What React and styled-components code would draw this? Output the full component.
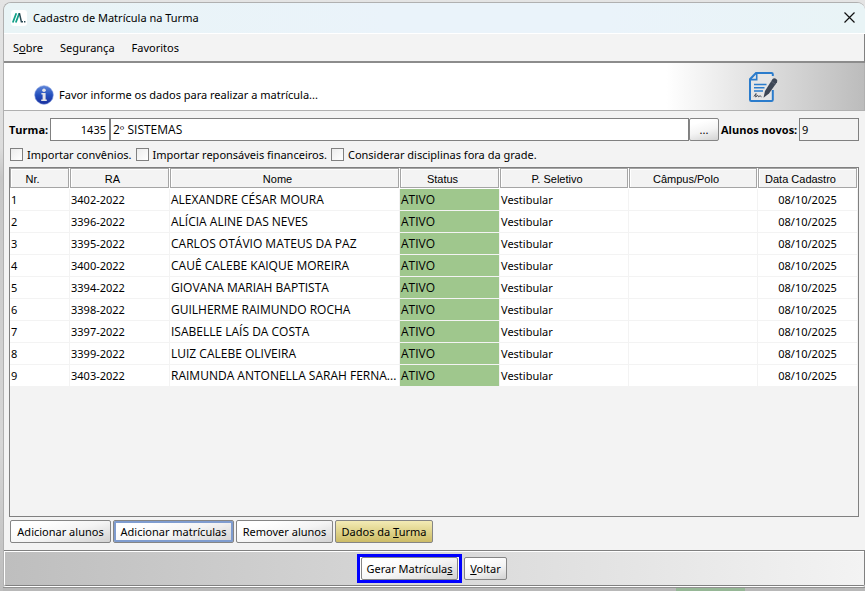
import React, { useState } from 'react'
import styled, { createGlobalStyle } from 'styled-components'

const students = [
  { nr: 1, ra: '3402-2022', name: 'ALEXANDRE CÉSAR MOURA' },
  { nr: 2, ra: '3396-2022', name: 'ALÍCIA ALINE DAS NEVES' },
  { nr: 3, ra: '3395-2022', name: 'CARLOS OTÁVIO MATEUS DA PAZ' },
  { nr: 4, ra: '3400-2022', name: 'CAUÊ CALEBE KAIQUE MOREIRA' },
  { nr: 5, ra: '3394-2022', name: 'GIOVANA MARIAH BAPTISTA' },
  { nr: 6, ra: '3398-2022', name: 'GUILHERME RAIMUNDO ROCHA' },
  { nr: 7, ra: '3397-2022', name: 'ISABELLE LAÍS DA COSTA' },
  { nr: 8, ra: '3399-2022', name: 'LUIZ CALEBE OLIVEIRA' },
  { nr: 9, ra: '3403-2022', name: 'RAIMUNDA ANTONELLA SARAH FERNA...' },
]

const columns = [
  { title: 'Nr.', width: 60 },
  { title: 'RA', width: 100 },
  { title: 'Nome', width: 230 },
  { title: 'Status', width: 100 },
  { title: 'P. Seletivo', width: 129 },
  { title: 'Câmpus/Polo', width: 129 },
  { title: 'Data Cadastro', width: 100 },
]

const Logo = () => (
  <LogoBox viewBox="0 0 16 16" aria-hidden="true">
    <rect width="16" height="16" rx="3" fill="#fff" />
    <path d="M1.8 12.5 5.3 3.2M4.8 12.5 8.3 3.2" stroke="#12a088" strokeWidth="1.8" />
    <path d="M8.4 3.2 10.4 11.8H12" stroke="#2b4a55" strokeWidth="1.5" fill="none" />
    <path d="M13 11.8h1.4" stroke="#2b4a55" strokeWidth="1.5" />
  </LogoBox>
)

const InfoIcon = () => (
  <svg width="20" height="20" viewBox="0 0 20 20" aria-hidden="true">
    <defs>
      <linearGradient id="info" x1="0" y1="0" x2="0" y2="1">
        <stop offset="0" stopColor="#5f86d8" />
        <stop offset="0.5" stopColor="#2450bd" />
        <stop offset="1" stopColor="#1a2f9c" />
      </linearGradient>
    </defs>
    <circle cx="10" cy="10" r="9.3" fill="url(#info)" stroke="#7f9be0" strokeWidth="0.6" />
    <circle cx="10" cy="5.2" r="1.8" fill="#e4e4e8" />
    <path d="M7.4 8h4.2v6.6h1.2v1.4H7.2v-1.4h1.4V9.4H7.4z" fill="#e4e4e8" />
  </svg>
)

const EnrollIcon = () => (
  <svg width="30" height="32" viewBox="0 0 30 32" fill="none" aria-hidden="true">
    <path d="M7.5 2H24.5V30H2V8z" fill="#e6e6e6" />
    <path
      d="M24.8 5V3.2Q24.8 2 23.5 2H8L2 8.2V28.8Q2 30 3.3 30H23.5Q24.8 30 24.8 28.8V19"
      stroke="#2b7ccc"
      strokeWidth="2"
    />
    <path d="M8.7 2.5V8.6H2.5" stroke="#2b7ccc" strokeWidth="1.6" />
    <path d="M6 13.5h12.5M6 16.8h10.5M6 20h9" stroke="#2b7ccc" strokeWidth="1.6" />
    <path d="M6 25.5 8 22.5 7.7 26l2-1.7.8 1.5 1.6-1 1.4 1" stroke="#444b57" strokeWidth="1" />
    <path d="M24.4 8.2Q26 6.6 28 7.8 30 9.2 29 11.2L21 22.6 15.5 26.8 17 20z" fill="#3d4655" />
    <path d="M22.8 10 27.4 13.2" stroke="#6a7280" strokeWidth="0.6" />
  </svg>
)

const CheckOption = ({ label }) => {
  const [checked, setChecked] = useState(false)
  return (
    <CheckLabel>
      <Check type="checkbox" checked={checked} onChange={() => setChecked(!checked)} />
      {label}
    </CheckLabel>
  )
}

const StudentTable = () => (
  <Grid>
    <Table>
      <colgroup>
        {columns.map(({ title, width }) => (
          <Col key={title} $share={width} />
        ))}
      </colgroup>
      <thead>
        <tr>
          {columns.map(({ title }) => (
            <Head key={title}>
              <HeadBox>{title}</HeadBox>
            </Head>
          ))}
        </tr>
      </thead>
      <tbody>
        {students.map(({ nr, ra, name }) => (
          <tr key={ra}>
            <Cell>{nr}</Cell>
            <Cell>{ra}</Cell>
            <CapsCell>{name}</CapsCell>
            <CapsCell $active>ATIVO</CapsCell>
            <Cell>Vestibular</Cell>
            <Cell />
            <Cell $center>08/10/2025</Cell>
          </tr>
        ))}
      </tbody>
    </Table>
  </Grid>
)

const App = () => (
  <>
    <GlobalStyle />
    <Desktop>
      <Window>
        <TitleBar>
          <Logo />
          <Title>Cadastro de Matrícula na Turma</Title>
          <Close type="button" aria-label="Fechar">
            <svg width="11" height="11" viewBox="0 0 11 11" aria-hidden="true">
              <path d="M.5.5l10 10M10.5.5l-10 10" stroke="#111" strokeWidth="1.2" />
            </svg>
          </Close>
        </TitleBar>
        <Menu>
          <MenuItem type="button">S<u>o</u>bre</MenuItem>
          <MenuItem type="button">Segurança</MenuItem>
          <MenuItem type="button">Favoritos</MenuItem>
        </Menu>
        <Banner>
          <Message>
            <InfoIcon />
            Favor informe os dados para realizar a matrícula...
          </Message>
          <EnrollIcon />
        </Banner>
        <Content>
          <ClassRow>
            <Label htmlFor="turma">Turma:</Label>
            <Code id="turma" defaultValue="1435" />
            <ClassName aria-label="Nome da turma" defaultValue="2º SISTEMAS" />
            <Button type="button" $width={30} aria-label="Buscar turma">...</Button>
            <CountLabel htmlFor="novos">Alunos novos:</CountLabel>
            <Count id="novos" value="9" readOnly />
          </ClassRow>
          <Options>
            <CheckOption label="Importar convênios." />
            <CheckOption label="Importar reponsáveis financeiros." />
            <CheckOption label="Considerar disciplinas fora da grade." />
          </Options>
          <StudentTable />
          <Actions>
            <Button type="button" $width={101}>Adicionar alunos</Button>
            <Button type="button" $width={121} $focused>Adicionar matrículas</Button>
            <Button type="button" $width={97}>Remover alunos</Button>
            <Button type="button" $width={98} $gold>Dados da <u>T</u>urma</Button>
          </Actions>
        </Content>
        <Footer>
          <Highlight>
            <Button type="button" $width={97}>Gerar Matrícula<u>s</u></Button>
          </Highlight>
          <Button type="button" $width={43}><u>V</u>oltar</Button>
        </Footer>
      </Window>
      <Behind>
        <BehindMark />
      </Behind>
    </Desktop>
  </>
)

const GlobalStyle = createGlobalStyle`
  * {
    box-sizing: border-box;
  }
  body {
    margin: 0;
    color: #000;
    background: #b8b8b8;
  }
  body, button, input {
    font-family: 'Noto Sans', 'Open Sans', sans-serif;
    font-size: 11px;
    color: #000;
  }
`;

const Desktop = styled.div`
  display: flex;
  flex-direction: column;
  min-height: 100vh;
  padding: 2px 0 0 3px;
  background: linear-gradient(#e4e4e4, #dcdcdc 25%, #c6c6c6 30%, #d6d6d6 75%, #bdbdbd);
`;
const Window = styled.div`
  flex: 1;
  display: flex;
  flex-direction: column;
  border: 1px solid #b0b0b0;
  border-right: 0;
  border-bottom-color: #fff;
  border-radius: 8px 8px 3px 3px;
  background: #f3f3f3;
  overflow: hidden;
`;
const TitleBar = styled.header`
  display: flex;
  align-items: center;
  height: 31px;
  padding: 0 10px 1px 7px;
  background: linear-gradient(90deg, #e9f4f6, #eaf3fa 45%, #eaf3fa 70%, #e9f4f6);
  border-bottom: 1px solid #fff;
`;
const LogoBox = styled.svg`
  width: 16px;
  height: 16px;
`;
const Title = styled.h1`
  flex: 1;
  margin: 0 0 0 6px;
  font-size: 11px;
  font-weight: 400;
`;
const Close = styled.button`
  display: flex;
  padding: 0;
  border: 0;
  background: none;
`;
const Menu = styled.nav`
  display: flex;
  gap: 17px;
  height: 29px;
  padding: 0 9px;
  border-right: 1px solid #808080;
  border-bottom: 2px solid #8c8c8c;
`;
const MenuItem = styled.button`
  padding: 0;
  border: 0;
  background: none;
`;
const Banner = styled.section`
  display: flex;
  justify-content: space-between;
  align-items: center;
  height: 48px;
  padding: 0 86px 0 30px;
  border: 1px solid #b0b0b0;
  border-width: 0 1px 1px 0;
  background: linear-gradient(90deg, #fff 77%, #bcbcbc);
`;
const Message = styled.p`
  display: flex;
  align-items: center;
  gap: 5px;
  margin: 16px 0 0;
`;
const Content = styled.main`
  flex: 1;
  display: flex;
  flex-direction: column;
  padding: 7px 6px 7px 5px;
`;
const ClassRow = styled.div`
  display: flex;
  align-items: center;
  height: 23px;
`;
const Label = styled.label`
  width: 41px;
  font-family: 'Open Sans', sans-serif;
  font-weight: 700;
  white-space: nowrap;
`;
const CountLabel = styled(Label)`
  width: 78px;
  margin-left: 2px;
`;
const Field = styled.input`
  height: 23px;
  padding: 0 2px;
  border: 1px solid #808080;
  border-radius: 0;
  background: #fff;
  outline: 0;
`;
const Code = styled(Field)`
  width: 60px;
  padding: 0 3px;
  text-align: right;
`;
const ClassName = styled(Field)`
  flex: 1;
  min-width: 0;
  font-family: 'Open Sans', sans-serif;
  font-size: 12px;
`;
const Count = styled(Field)`
  width: 60px;
  background: #f3f3f3;
`;
const Options = styled.div`
  display: flex;
  gap: 4px;
  padding: 5px 1px 4px;
`;
const CheckLabel = styled.label`
  display: flex;
  align-items: center;
  gap: 4px;
  height: 17px;
  white-space: nowrap;
`;
const Check = styled.input`
  appearance: none;
  width: 13px;
  height: 13px;
  margin: 0;
  border: 1px solid #808080;
  background: linear-gradient(135deg, #ececec, #fff);

  &:checked {
    box-shadow: inset 0 0 0 3px #fff;
    background: #333;
  }
`;
const Grid = styled.div`
  flex: 1;
  border: 1px solid #808080;
`;
const Table = styled.table`
  width: 100%;
  table-layout: fixed;
  border-collapse: separate;
  border-spacing: 0;
`;
const Col = styled.col`
  width: ${({ $share }) => ($share / 848) * 100}%;
`;
const Head = styled.th`
  height: 21px;
  padding: 0 1px 1px 0;
  background: #fff;
`;
const HeadBox = styled.div`
  height: 20px;
  padding-right: 14px;
  border: 1px solid #a5a5a5;
  box-shadow: inset 1px 1px #fff;
  background: #f3f3f3;
  font: 11px/20px 'Liberation Sans', Arial, sans-serif;
  white-space: nowrap;
`;
const Cell = styled.td`
  height: 22px;
  padding: 0 1px;
  border: 1px solid #f3f3f3;
  border-width: 0 1px 1px 0;
  background: ${({ $active }) => ($active ? '#9fc78d' : '#fff')};
  text-align: ${({ $center }) => ($center ? 'center' : 'left')};
  line-height: 20px;
  white-space: nowrap;
  overflow: hidden;
  text-overflow: ellipsis;
`;
const CapsCell = styled(Cell)`
  font-family: 'Open Sans', sans-serif;
  font-size: 12px;
`;
const Actions = styled.div`
  display: flex;
  gap: 2px;
  padding: 3px 1px 0;
`;
const Button = styled.button`
  flex: none;
  min-width: ${({ $width }) => $width}px;
  height: 23px;
  padding: 0;
  border: 1px solid #858585;
  border-radius: 2px;
  background: ${({ $gold }) => ($gold
    ? 'linear-gradient(#f3ebb5, #dccf83 60%, #cdbc67)'
    : 'linear-gradient(165deg, #fff 20%, #f4f4f4 55%, #d2d2d2)')};
  box-shadow: ${({ $focused }) => ($focused ? 'inset 0 0 0 2px #7f9ccf' : 'none')};
  white-space: nowrap;
`;
const Footer = styled.footer`
  display: flex;
  justify-content: center;
  align-items: center;
  gap: 2px;
  height: 36px;
  padding-right: 4px;
  border: 1px solid #808080;
  border-left: 0;
  box-shadow: inset 1px 1px #fff;
  background: linear-gradient(90deg, #bebebe, #f3f3f3);
`;
const Highlight = styled.div`
  display: flex;
  border: 3px solid #00f;
  background: #fff;
  padding: 0 1px;
`;
const Behind = styled.div`
  display: flex;
  justify-content: flex-end;
  height: 4px;
  padding-right: 120px;
  border-top: 1px solid #929292;
  background: #b8b8b8;
`;
const BehindMark = styled.span`
  width: 69px;
  background: #96b796;
`;

export default App
